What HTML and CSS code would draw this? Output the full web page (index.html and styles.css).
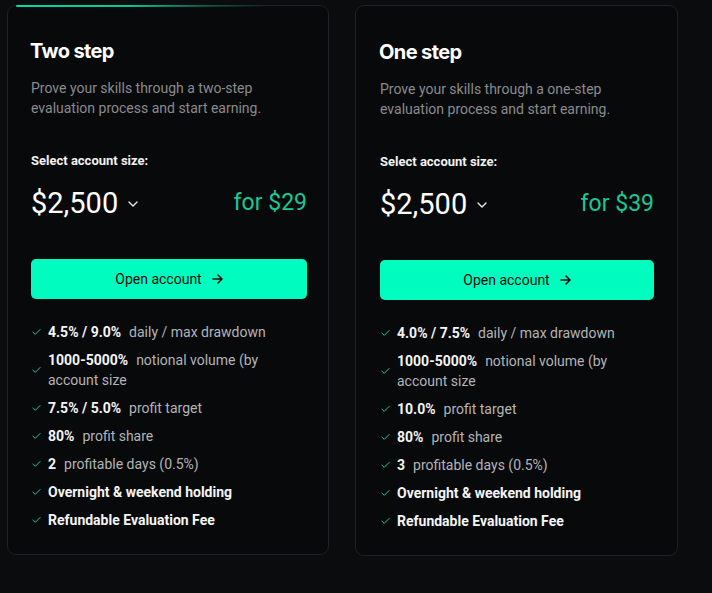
FILE: index.html
```html
<!DOCTYPE html>
<html lang="en">
<head>
<meta charset="utf-8">
<title>Plans</title>
<link rel="stylesheet" href="styles.css">
</head>
<body>
<main class="plans">
  <section class="card card-glow">
    <h2 class="title">Two step</h2>
    <p class="desc">Prove your skills through a two-step evaluation process and start earning.</p>
    <div class="label">Select account size:</div>
    <div class="price-row">
      <div class="size">$2,500 <svg class="chev" width="10" height="6" viewBox="0 0 10 6"><polyline points="1,1 5,5 9,1" fill="none" stroke="#e8e8e8" stroke-width="1.4" stroke-linecap="round" stroke-linejoin="round"/></svg></div>
      <div class="cost">for $29</div>
    </div>
    <button class="btn">Open account <svg class="arrow" width="11" height="10" viewBox="0 0 11 10"><path d="M1 5H10M6 1L10 5L6 9" fill="none" stroke="#0b0b0b" stroke-width="1.5" stroke-linecap="round" stroke-linejoin="round"/></svg></button>
    <ul class="features">
      <li><svg class="check" viewBox="0 0 10 8"><polyline points="1,4.2 3.6,6.6 9,1.2" fill="none" stroke="#1ccf9c" stroke-width="1.1" stroke-linecap="round" stroke-linejoin="round"/></svg><span><b>4.5% / 9.0%</b>daily / max drawdown</span></li>
      <li><svg class="check" viewBox="0 0 10 8"><polyline points="1,4.2 3.6,6.6 9,1.2" fill="none" stroke="#1ccf9c" stroke-width="1.1" stroke-linecap="round" stroke-linejoin="round"/></svg><span><b>1000-5000%</b>notional volume (by account size</span></li>
      <li><svg class="check" viewBox="0 0 10 8"><polyline points="1,4.2 3.6,6.6 9,1.2" fill="none" stroke="#1ccf9c" stroke-width="1.1" stroke-linecap="round" stroke-linejoin="round"/></svg><span><b>7.5% / 5.0%</b>profit target</span></li>
      <li><svg class="check" viewBox="0 0 10 8"><polyline points="1,4.2 3.6,6.6 9,1.2" fill="none" stroke="#1ccf9c" stroke-width="1.1" stroke-linecap="round" stroke-linejoin="round"/></svg><span><b>80%</b>profit share</span></li>
      <li><svg class="check" viewBox="0 0 10 8"><polyline points="1,4.2 3.6,6.6 9,1.2" fill="none" stroke="#1ccf9c" stroke-width="1.1" stroke-linecap="round" stroke-linejoin="round"/></svg><span><b>2</b>profitable days (0.5%)</span></li>
      <li><svg class="check" viewBox="0 0 10 8"><polyline points="1,4.2 3.6,6.6 9,1.2" fill="none" stroke="#1ccf9c" stroke-width="1.1" stroke-linecap="round" stroke-linejoin="round"/></svg><span><b>Overnight &amp; weekend holding</b></span></li>
      <li><svg class="check" viewBox="0 0 10 8"><polyline points="1,4.2 3.6,6.6 9,1.2" fill="none" stroke="#1ccf9c" stroke-width="1.1" stroke-linecap="round" stroke-linejoin="round"/></svg><span><b>Refundable Evaluation Fee</b></span></li>
    </ul>
  </section>

  <section class="card card-second">
    <h2 class="title">One step</h2>
    <p class="desc">Prove your skills through a one-step evaluation process and start earning.</p>
    <div class="label">Select account size:</div>
    <div class="price-row">
      <div class="size">$2,500 <svg class="chev" width="10" height="6" viewBox="0 0 10 6"><polyline points="1,1 5,5 9,1" fill="none" stroke="#e8e8e8" stroke-width="1.4" stroke-linecap="round" stroke-linejoin="round"/></svg></div>
      <div class="cost">for $39</div>
    </div>
    <button class="btn">Open account <svg class="arrow" width="11" height="10" viewBox="0 0 11 10"><path d="M1 5H10M6 1L10 5L6 9" fill="none" stroke="#0b0b0b" stroke-width="1.5" stroke-linecap="round" stroke-linejoin="round"/></svg></button>
    <ul class="features">
      <li><svg class="check" viewBox="0 0 10 8"><polyline points="1,4.2 3.6,6.6 9,1.2" fill="none" stroke="#1ccf9c" stroke-width="1.1" stroke-linecap="round" stroke-linejoin="round"/></svg><span><b>4.0% / 7.5%</b>daily / max drawdown</span></li>
      <li><svg class="check" viewBox="0 0 10 8"><polyline points="1,4.2 3.6,6.6 9,1.2" fill="none" stroke="#1ccf9c" stroke-width="1.1" stroke-linecap="round" stroke-linejoin="round"/></svg><span><b>1000-5000%</b>notional volume (by account size</span></li>
      <li><svg class="check" viewBox="0 0 10 8"><polyline points="1,4.2 3.6,6.6 9,1.2" fill="none" stroke="#1ccf9c" stroke-width="1.1" stroke-linecap="round" stroke-linejoin="round"/></svg><span><b>10.0%</b>profit target</span></li>
      <li><svg class="check" viewBox="0 0 10 8"><polyline points="1,4.2 3.6,6.6 9,1.2" fill="none" stroke="#1ccf9c" stroke-width="1.1" stroke-linecap="round" stroke-linejoin="round"/></svg><span><b>80%</b>profit share</span></li>
      <li><svg class="check" viewBox="0 0 10 8"><polyline points="1,4.2 3.6,6.6 9,1.2" fill="none" stroke="#1ccf9c" stroke-width="1.1" stroke-linecap="round" stroke-linejoin="round"/></svg><span><b>3</b>profitable days (0.5%)</span></li>
      <li><svg class="check" viewBox="0 0 10 8"><polyline points="1,4.2 3.6,6.6 9,1.2" fill="none" stroke="#1ccf9c" stroke-width="1.1" stroke-linecap="round" stroke-linejoin="round"/></svg><span><b>Overnight &amp; weekend holding</b></span></li>
      <li><svg class="check" viewBox="0 0 10 8"><polyline points="1,4.2 3.6,6.6 9,1.2" fill="none" stroke="#1ccf9c" stroke-width="1.1" stroke-linecap="round" stroke-linejoin="round"/></svg><span><b>Refundable Evaluation Fee</b></span></li>
    </ul>
  </section>
</main>
</body>
</html>
```

FILE: styles.css
```css
* { box-sizing: border-box; }

html, body {
  margin: 0;
  background: #0b0c0e;
  height: 100%;
}

body {
  font-family: Roboto, "Liberation Sans", sans-serif;
  color: #ffffff;
}

.plans {
  display: flex;
  gap: 26px;
  padding: 5px 0 0 7px;
  align-items: flex-start;
}

.card {
  position: relative;
  width: 322px;
  height: 550px;
  background: #08090b;
  border: 1px solid #1f2124;
  border-radius: 9px;
  padding: 31px 21px 0 23px;
}

.card-second {
  width: 323px;
  height: 551px;
  padding: 32px 23px 0 24px;
  border-color: #1c2224;
}

.card-glow::before {
  content: "";
  position: absolute;
  top: -1px;
  left: 8px;
  width: 250px;
  height: 2px;
  border-radius: 2px;
  background: linear-gradient(90deg, rgba(0, 230, 170, 0.95) 0%, rgba(0, 220, 160, 0.9) 45%, rgba(0, 200, 150, 0.35) 75%, rgba(0, 200, 150, 0) 100%);
}

.title {
  margin: 0;
  font-family: Inter, "Open Sans", sans-serif;
  font-weight: 700;
  font-size: 20px;
  line-height: 28px;
  letter-spacing: -0.6px;
  color: #ffffff;
  margin-left: -1px;
}

.desc {
  margin: 13px 0 0;
  font-size: 14px;
  line-height: 20px;
  color: #8a8b8d;
  max-width: 250px;
}

.label {
  margin-top: 33px;
  font-size: 13px;
  font-weight: 700;
  line-height: 20px;
  color: #f2f2f2;
}

.price-row {
  margin-top: 14px;
  display: flex;
  justify-content: space-between;
  align-items: center;
  height: 36px;
}

.size {
  display: flex;
  align-items: center;
  gap: 10px;
  font-size: 29px;
  line-height: 36px;
  color: #ffffff;
}

.chev { margin-top: 2px; }

.cost {
  font-size: 23px;
  line-height: 36px;
  color: #17c995;
}

.btn {
  margin-top: 38px;
  width: 100%;
  height: 40px;
  border: 0;
  border-radius: 5px;
  background: #00fcbf;
  font-family: Roboto, "Liberation Sans", sans-serif;
  font-size: 14px;
  color: #0b0b0b;
  display: flex;
  align-items: center;
  justify-content: center;
  gap: 10px;
  padding: 0;
}

.features {
  list-style: none;
  margin: 23px 0 0;
  padding: 0;
  display: flex;
  flex-direction: column;
  gap: 8px;
}

.features li {
  display: flex;
  align-items: center;
  gap: 7px;
  font-size: 14px;
  line-height: 20px;
  color: #b3b4b6;
  padding-left: 1px;
}

.check {
  width: 9px;
  height: 8px;
  flex: none;
}

.features b {
  font-weight: 700;
  color: #f4f4f4;
  margin-right: 8px;
}
```
